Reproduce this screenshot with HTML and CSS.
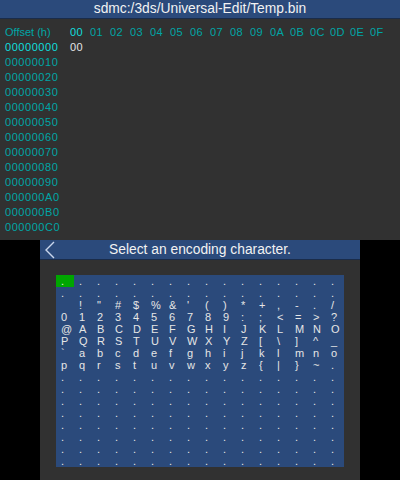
FILE: index.html
```html
<!DOCTYPE html>
<html>
<head>
<meta charset="utf-8">
<link rel="stylesheet" href="styles.css">
</head>
<body>
<div class="top">
  <div class="bar"><span class="title">sdmc:/3ds/Universal-Edit/Temp.bin</span></div>
  <div class="hex">
    <span class="lbl">Offset (h)</span>
    <span class="hd on">00</span><span class="hd">01</span><span class="hd">02</span><span class="hd">03</span><span class="hd">04</span><span class="hd">05</span><span class="hd">06</span><span class="hd">07</span><span class="hd">08</span><span class="hd">09</span><span class="hd">0A</span><span class="hd">0B</span><span class="hd">0C</span><span class="hd">0D</span><span class="hd">0E</span><span class="hd">0F</span>
    <span class="lbl on">00000000</span><span class="val">00</span>
    <span class="lbl">00000010</span>
    <span class="lbl">00000020</span>
    <span class="lbl">00000030</span>
    <span class="lbl">00000040</span>
    <span class="lbl">00000050</span>
    <span class="lbl">00000060</span>
    <span class="lbl">00000070</span>
    <span class="lbl">00000080</span>
    <span class="lbl">00000090</span>
    <span class="lbl">000000A0</span>
    <span class="lbl">000000B0</span>
    <span class="lbl">000000C0</span>
  </div>
</div>
<div class="bottom">
  <div class="screen">
    <div class="bar bar2">
      <svg class="back" width="12" height="18" viewBox="0 0 12 18"><polyline points="10,1 2,9 10,17" fill="none" stroke="#c9d6ec" stroke-width="1.4"/></svg>
      <span class="title">Select an encoding character.</span>
    </div>
    <div class="panel">
      <i class="sel">.</i><i>.</i><i>.</i><i>.</i><i>.</i><i>.</i><i>.</i><i>.</i><i>.</i><i>.</i><i>.</i><i>.</i><i>.</i><i>.</i><i>.</i><i>.</i>
      <i>.</i><i>.</i><i>.</i><i>.</i><i>.</i><i>.</i><i>.</i><i>.</i><i>.</i><i>.</i><i>.</i><i>.</i><i>.</i><i>.</i><i>.</i><i>.</i>
      <i></i><i>!</i><i>&quot;</i><i>#</i><i>$</i><i>%</i><i>&amp;</i><i>'</i><i>(</i><i>)</i><i>*</i><i>+</i><i>,</i><i>-</i><i>.</i><i>/</i>
      <i>0</i><i>1</i><i>2</i><i>3</i><i>4</i><i>5</i><i>6</i><i>7</i><i>8</i><i>9</i><i>:</i><i>;</i><i>&lt;</i><i>=</i><i>&gt;</i><i>?</i>
      <i>@</i><i>A</i><i>B</i><i>C</i><i>D</i><i>E</i><i>F</i><i>G</i><i>H</i><i>I</i><i>J</i><i>K</i><i>L</i><i>M</i><i>N</i><i>O</i>
      <i>P</i><i>Q</i><i>R</i><i>S</i><i>T</i><i>U</i><i>V</i><i>W</i><i>X</i><i>Y</i><i>Z</i><i>[</i><i>\</i><i>]</i><i>^</i><i>_</i>
      <i>`</i><i>a</i><i>b</i><i>c</i><i>d</i><i>e</i><i>f</i><i>g</i><i>h</i><i>i</i><i>j</i><i>k</i><i>l</i><i>m</i><i>n</i><i>o</i>
      <i>p</i><i>q</i><i>r</i><i>s</i><i>t</i><i>u</i><i>v</i><i>w</i><i>x</i><i>y</i><i>z</i><i>{</i><i>|</i><i>}</i><i>~</i><i>.</i>
      <i>.</i><i>.</i><i>.</i><i>.</i><i>.</i><i>.</i><i>.</i><i>.</i><i>.</i><i>.</i><i>.</i><i>.</i><i>.</i><i>.</i><i>.</i><i>.</i>
      <i>.</i><i>.</i><i>.</i><i>.</i><i>.</i><i>.</i><i>.</i><i>.</i><i>.</i><i>.</i><i>.</i><i>.</i><i>.</i><i>.</i><i>.</i><i>.</i>
      <i>.</i><i>.</i><i>.</i><i>.</i><i>.</i><i>.</i><i>.</i><i>.</i><i>.</i><i>.</i><i>.</i><i>.</i><i>.</i><i>.</i><i>.</i><i>.</i>
      <i>.</i><i>.</i><i>.</i><i>.</i><i>.</i><i>.</i><i>.</i><i>.</i><i>.</i><i>.</i><i>.</i><i>.</i><i>.</i><i>.</i><i>.</i><i>.</i>
      <i>.</i><i>.</i><i>.</i><i>.</i><i>.</i><i>.</i><i>.</i><i>.</i><i>.</i><i>.</i><i>.</i><i>.</i><i>.</i><i>.</i><i>.</i><i>.</i>
      <i>.</i><i>.</i><i>.</i><i>.</i><i>.</i><i>.</i><i>.</i><i>.</i><i>.</i><i>.</i><i>.</i><i>.</i><i>.</i><i>.</i><i>.</i><i>.</i>
      <i>.</i><i>.</i><i>.</i><i>.</i><i>.</i><i>.</i><i>.</i><i>.</i><i>.</i><i>.</i><i>.</i><i>.</i><i>.</i><i>.</i><i>.</i><i>.</i>
      <i>.</i><i>.</i><i>.</i><i>.</i><i>.</i><i>.</i><i>.</i><i>.</i><i>.</i><i>.</i><i>.</i><i>.</i><i>.</i><i>.</i><i>.</i><i>.</i>
    </div>
  </div>
</div>
</body>
</html>
```
FILE: styles.css
```css
html, body {
  margin: 0;
  padding: 0;
}
body {
  width: 400px;
  height: 480px;
  background: #000;
  font-family: "Liberation Sans", Arial, sans-serif;
  overflow: hidden;
}
.top {
  height: 240px;
  background: #313131;
}
.bar {
  height: 18px;
  background: #2b4a7b;
  border-bottom: 1px solid #1a2c4a;
  display: flex;
  align-items: center;
  justify-content: center;
  position: relative;
}
.title {
  color: #f2f2f2;
  font-size: 13.8px;
  line-height: 18px;
  white-space: nowrap;
}
.hex {
  display: grid;
  grid-template-columns: 65px repeat(16, 20px);
  grid-auto-rows: 15px;
  padding: 6px 0 0 5px;
  font-size: 11px;
  line-height: 15px;
  color: #00a6a6;
}
.lbl {
  grid-column: 1;
  letter-spacing: 0.55px;
  white-space: nowrap;
}
.lbl:first-child {
  letter-spacing: 0;
}
.hd, .val {
  letter-spacing: 0.5px;
}
.on {
  color: #10dede;
}
.val {
  color: #e4e4e4;
}
.bottom {
  height: 240px;
  display: flex;
  justify-content: center;
}
.screen {
  width: 320px;
  background: #313131;
  display: flex;
  flex-direction: column;
}
.bar2 {
  height: 19px;
}
.back {
  position: absolute;
  left: 4px;
  top: 1px;
}
.panel {
  margin: 15px 16px 0;
  width: 288px;
  height: 192px;
  background: #2b4a7b;
  display: grid;
  grid-template-columns: repeat(16, 18px);
  grid-template-rows: repeat(16, 12px);
}
.panel i {
  font-style: normal;
  font-size: 11px;
  line-height: 12px;
  color: #e6e6e6;
  padding-left: 5px;
  white-space: pre;
  overflow: hidden;
}
.panel i.sel {
  background: #00a600;
}
```
